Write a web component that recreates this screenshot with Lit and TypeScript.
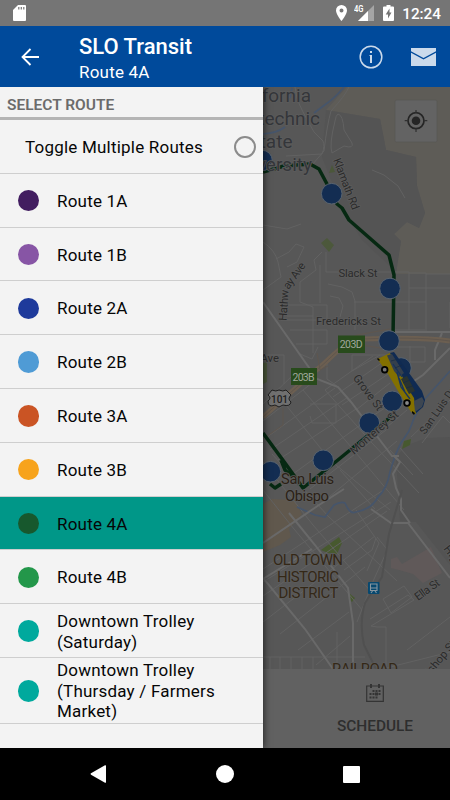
import { LitElement, html, css, svg } from "lit";
import { customElement, property } from "lit/decorators.js";
import { classMap } from "lit/directives/class-map.js";
import { styleMap } from "lit/directives/style-map.js";

interface Route {
  name: string;
  color: string;
  tall?: boolean;
}

const ROUTES: Route[] = [
  { name: "Route 1A", color: "#421d60" },
  { name: "Route 1B", color: "#8755a5" },
  { name: "Route 2A", color: "#1e3a9b" },
  { name: "Route 2B", color: "#4f9bd5" },
  { name: "Route 3A", color: "#ca5424" },
  { name: "Route 3B", color: "#f7a31c" },
  { name: "Route 4A", color: "#17582d" },
  { name: "Route 4B", color: "#23974a" },
  { name: "Downtown Trolley (Saturday)", color: "#00a99d" },
  { name: "Downtown Trolley (Thursday / Farmers Market)", color: "#00a99d", tall: true },
];

const STOPS = [
  [262, 160.5],
  [331.7, 193.7],
  [390, 288.5],
  [389, 341],
  [401, 368],
  [392.2, 401.3],
  [369.3, 423],
  [323.2, 460.3],
  [270.4, 471.7],
];

const MINOR_STREETS = [
  "M295 87L297 98Q300 108 314 132L323 141Q325 146 322 154L286 156",
  "M349 87Q345 96 331 111Q327 125 324 151L312 165",
  "M338 114Q343 115 344 130L352 143Q354 149 344 146L332 153Q329 145 335 121Q336 115 338 114",
  "M263 225L287 229L301 224M263 242Q275 250 278 262L281 277L263 290",
  "M276 259L289 252L296 244L304 247L297 262L287 267",
  "M322 252L314 260L316 270L300 282V302L313 307V353M326 252V272H409V330M409 273H426V331M409 288H450M354 302H426M426 274H450",
  "M328 284L342 287L352 292L355 301V330M330 296L339 298L343 306L340 317M320 265V303M287 305H327V320H281M287 316H313M290 330H327V344H296",
  "M385 347H425V362H400M410 346V362M393 330H425M450 302V328",
  "M263 355H284V384M300 354L312 359L318 347M352 355H394M352 355V371L380 355M327 361V379L337 386M337 350H353",
  "M325 390L373 356M333 397L386 360M342 405L397 368M356 410L390 383M362 423L400 398M374 438L407 410",
  "M263 404L293 375M263 421L312 383M263 440L335 388M270 450L348 397M278 460L356 409M293 474L374 415M310 489L386 430M329 497L397 441",
  "M282 400L330 460L390 510M303 390L351 447L404 510M325 390L372 443L419 493",
  "M272 454L328 516L397 581M263 490L294 529L363 611M263 462L313 525L372 593M340 470L375 509",
  "M263 569L385 489M263 582L391 502M263 596L387 511M263 622L375 536M280 634L365 567M298 650L349 612M316 665L350 636",
  "M310 404H336V423H312L310 416M400 448L423 474M390 450L413 475M422 443L443 416L450 423M411 437L450 400",
  "M377 537L386 548V553L374 579L364 604L357 622M376 538L372 550L344 570M356 510L379 543L367 571",
  "M383 599L404 586L412 597L391 613ZM370 619L408 595L414 600L371 626L377 627H386V668M337 632V668M365 657H263M270 657V669M280 657V669M291 657V669M302 657V669M313 657V669",
  "M407 650L450 617M386 668L450 652M372 170L384 175L398 186L405 198",
];

@customElement("transit-map")
export class TransitMap extends LitElement {
  static override styles = css`
    :host {
      display: block;
      overflow: hidden;
    }

    svg {
      display: block;
      width: 100%;
      height: 100%;
      font-family: Roboto, sans-serif;
    }

    .minor {
      fill: none;
      stroke: #626262;
      stroke-width: 1;
    }

    .major {
      fill: none;
      stroke: #696969;
      stroke-width: 2;
    }

    .water {
      fill: none;
      stroke: #46556b;
      stroke-width: 1.7;
    }

    .park {
      fill: #47592f;
    }

    .route {
      fill: none;
      stroke: #062912;
      stroke-width: 3.5;
      stroke-linejoin: round;
    }

    .stop {
      fill: #132d52;
      stroke: #58636f;
      stroke-width: 1;
    }

    .label {
      fill: #2b2b2b;
      stroke: #5c5c5c;
      stroke-width: 1.6;
      paint-order: stroke;
      font-size: 11.3px;
    }

    .campus {
      fill: #34363a;
      font-size: 19px;
    }

    .city {
      fill: #2b2116;
      font-size: 14.7px;
    }

    .district {
      fill: #342817;
      font-size: 15px;
    }

    .exit {
      fill: #a0a89b;
      font-size: 10.5px;
    }
  `;

  private _bus() {
    return svg`
      <g>
        <path fill="#0f2a52" d="M390 353L394 352L422 391L425 400L423 407L415 414L407 399Z" />
        <path fill="#837000" d="M377.5 359L390 353L394 363L401 374L409 390L414 398L416 414L411 412L406 404L398 391L388 374Z" />
        <path fill="#343f4c" d="M387 355.5L392 354L404 373L399 377L394 371Z" />
        <path fill="#293331" d="M401 379L407 376L415 391L409 394Z" />
        <path fill="#3d4651" d="M414 401L422 397L424 401L422 407L415 412Z" />
        <path fill="none" stroke="#17345d" stroke-width="1.3" d="M397 372L401 387L410 399M399 378L405 392M393 364L402 377" />
        <path stroke="#152943" stroke-width=".7" d="M391 361L398 359M395 368L402 365M403 383L410 380M406 388L413 386" />
        <circle cx="384.7" cy="369.7" r="2.8" fill="#777" stroke="#020202" stroke-width="1.8" />
        <circle cx="407" cy="403" r="2.8" fill="#888" stroke="#020202" stroke-width="1.8" />
        <path fill="#080804" d="M378 358L380 360L379 361L377 359ZM412 411L415 413L414 415L412 413Z" />
      </g>
    `;
  }

  override render() {
    return html`
      <svg viewBox="263 87 187 582" preserveAspectRatio="xMidYMid slice">
        <rect x="263" y="87" width="187" height="582" fill="#575757" />
        <path fill="#5e5c57" d="M347 87H450V274H396L401 241L394 234L407 222L419 228L425 213L417 186L416 157L386 150L380 119L326 110Z" />
        <path fill="#545454" d="M326 110L380 119L386 150L416 157L417 186L425 213L419 228L407 222L394 234L401 241L396 272L362 240L342 208L322 157Z" />
        <path fill="#535353" d="M396 458L405 446L427 438L450 437V565L416 522L400 521Z" />
        <path fill="#60584d" d="M263 504L272 499L294 500L302 514L289 529L291 537L280 545L263 552Z" />
        <path fill="#605959" d="M391 559L397 557L402 564L414 557L431 547L442 573L423 583L413 574L399 570L391 568Z" />
        <path class="park" d="M321 550L339 537L342 543L337 554L328 553Z" />
        <path class="park" d="M350 594L355 598L352 602L350 600ZM402 449L404 441L411 439L410 445Z" />
        <path class="park" d="M332 165L335 172L329 173ZM263 363L267 362V382L263 384ZM321 243L327 238L334 245L329 252Z" opacity=".7" />
        <path class="minor" d="${MINOR_STREETS.join("")}" />
        <path class="water" d="M344 87Q335 98 326 104L314 113M292 88L290 98M263 134Q277 133 285 127" />
        <path class="water" d="M450 371L424 400Q419 410 414 418Q412 424 409 431L401 443Q395 454 390 472Q387 489 378 497Q372 509 356 512Q350 515 345 503Q341 501 334 505L325 517L315 515L297 507" />
        <path class="major" d="M263 302L317 379L338 387L351 402L392 456H399M263 579L312 549M263 543L319 505L344 489M289 513L315 545L348 588L353 623V669M263 578L305 629L333 669M371 509L391 523H408L450 578M450 348L423 375L411 383M450 332H393M442 333L435 350L435 360M394 456L400 462L393 474L396 488L401 499V510L410 523" />
        <path fill="none" stroke="#505050" stroke-width="2" d="M402 490L389 534L382 577L365 603Q359 622 364 645L376 669" />
        <path fill="none" stroke="#6c5f51" stroke-width="5" d="M450 341C423 337 390 338 364 339C341 341 331 360 315 371L263 417" />
        <path fill="none" stroke="#5f564e" stroke-width="1" d="M450 341C423 337 390 338 364 339C341 341 331 360 315 371L263 417M390 329L357 335L337 345M317 353L320 370L328 366M263 439L283 425V408M362 345L380 348" />
        <path class="route" d="M263 172L284 166L310 164L319 169L327 184L337 204L342 208L349 220L389 255L394 275L393 337" />
        <path class="route" d="M393 415L333 464L303 488L285 463L263 433M281 460L285 470L299 484M270 484L275 488L281 484" />
        ${STOPS.map(([x, y]) => svg`<circle class="stop" cx=${x} cy=${y} r="10.3" />`)}
        <g class="label campus">
          <text x="311" y="102" text-anchor="end">California</text>
          <text x="320" y="125" text-anchor="end">Polytechnic</text>
          <text x="292.5" y="148" text-anchor="end">State</text>
          <text x="312" y="171" text-anchor="end">University</text>
        </g>
        <g class="label">
          <text transform="translate(333 160) rotate(69)" textLength="54">Klamath Rd</text>
          <text x="338.5" y="277" textLength="39">Slack St</text>
          <text x="316" y="325.3" textLength="65">Fredericks St</text>
          <text transform="translate(286.5 321) rotate(-86)" textLength="31">Hathw</text>
          <text transform="translate(288.5 290) rotate(-54)" textLength="30">ay Ave</text>
          <text x="279" y="362" text-anchor="end">Ave</text>
          <text transform="translate(352.5 378) rotate(53)" textLength="42">Grove St</text>
          <text transform="translate(354 455) rotate(-41)" textLength="60">Monterey St</text>
          <text transform="translate(425 435) rotate(-55)" font-size="10.8">San Luis Drive</text>
          <text transform="translate(418 601) rotate(-36)" textLength="28">Ella St</text>
          <text transform="translate(443 549) rotate(52)">High St</text>
          <text transform="translate(426 681) rotate(-50)">Bishop St</text>
        </g>
        ${this._bus()}
        <g class="label city">
          <text x="281" y="484" textLength="53">San Luis</text>
          <text x="285" y="501" textLength="44">Obispo</text>
        </g>
        <g class="label district">
          <text x="273" y="565" textLength="70">OLD TOWN</text>
          <text x="277" y="581.5" textLength="62">HISTORIC</text>
          <text x="278.5" y="598" textLength="60">DISTRICT</text>
          <text x="332" y="674" textLength="66">RAILROAD</text>
        </g>
        <rect x="338" y="335.5" width="27" height="17.5" fill="#284b1c" />
        <text class="exit" x="339.7" y="348" textLength="23">203D</text>
        <rect x="291" y="368" width="26" height="17" fill="#284b1c" />
        <text class="exit" x="292.5" y="380.7" textLength="22">203B</text>
        <path fill="#707070" stroke="#202020" stroke-width="1" d="M272 390Q276 392 279 390Q283 392 286 390L291 395Q287 399 291 402Q290 407 283 405L279 407L275 405Q268 408 268 401Q272 398 268 395Z" />
        <text x="279.5" y="402.5" text-anchor="middle" font-size="10" font-weight="500" fill="#202020">101</text>
        <rect x="368" y="582" width="11.5" height="12" rx="1" fill="#07486f" />
        <path fill="none" stroke="#8796a0" stroke-width="1.1" d="M370.5 584H377V590.5H370.5ZM371 588H377M371 593L372.5 591M376.5 593L375 591" />
        <rect x="395" y="100" width="42" height="42" rx="1.5" fill="#636363" stroke="#575653" stroke-width=".7" />
        <circle cx="416" cy="120.7" r="8" fill="none" stroke="#252525" stroke-width="1.7" />
        <circle cx="416" cy="120.7" r="4.3" fill="#252525" />
        <path stroke="#303030" stroke-width="1.2" d="M416 110V113M416 128.5V132M404.7 120.7H408M424 120.7H427.3" />
      </svg>
    `;
  }
}

@customElement("route-drawer")
export class RouteDrawer extends LitElement {
  @property({ type: String }) selected = "";

  static override styles = css`
    :host {
      display: flex;
      flex-direction: column;
      background: #f3f3f3;
      color: #060606;
      font-size: 17px;
      line-height: 20.6px;
      letter-spacing: 0.21px;
    }

    .heading {
      box-sizing: border-box;
      height: 33px;
      padding: 8px 7px 0;
      border-bottom: 3px solid #b4b4b4;
      color: #6b6b6b;
      font-size: 15.5px;
      line-height: 20px;
      font-weight: 600;
      letter-spacing: 0;
    }

    .toggle {
      box-sizing: border-box;
      display: flex;
      align-items: center;
      justify-content: space-between;
      height: 53.8px;
      padding: 1px 7px 0 25px;
      border-bottom: 1px solid #cecece;
    }

    .radio {
      box-sizing: border-box;
      width: 22px;
      height: 22px;
      border: 2px solid #8b8b8b;
      border-radius: 50%;
    }

    .route {
      box-sizing: border-box;
      display: flex;
      align-items: center;
      gap: 18px;
      height: 53.8px;
      padding: 1px 20px 0 17.5px;
      border-bottom: 1px solid #cecece;
    }

    .name {
      padding-top: 1px;
    }

    .tall {
      height: 66px;
    }

    .tall .name {
      padding-top: 0;
    }

    .active {
      background: #009788;
    }

    .dot {
      flex: none;
      width: 21.5px;
      height: 21.5px;
      border-radius: 50%;
    }
  `;

  override render() {
    return html`
      <div class="heading">SELECT ROUTE</div>
      <div class="toggle">
        <span class="name">Toggle Multiple Routes</span>
        <span class="radio"></span>
      </div>
      ${ROUTES.map(
        (r) => html`
          <div class=${classMap({ route: true, tall: !!r.tall, active: r.name === this.selected })}>
            <span class="dot" style=${styleMap({ background: r.color })}></span>
            <span class="name">${r.name}</span>
          </div>
        `,
      )}
    `;
  }
}

@customElement("app-root")
export class AppRoot extends LitElement {
  static override styles = css`
    :host {
      display: flex;
      flex-direction: column;
      height: 800px;
      overflow: hidden;
      font-family: Roboto, sans-serif;
      background: #000;
    }

    svg {
      display: block;
    }

    .status {
      box-sizing: border-box;
      display: flex;
      align-items: center;
      height: 26px;
      padding: 0 9px 0 13px;
      background: #757575;
      color: #fff;
    }

    .status .pin {
      margin-left: auto;
    }

    .signal {
      margin-left: 7px;
    }

    .battery {
      margin: 0 8px 0 9px;
    }

    .clock {
      padding-top: 1px;
      font-size: 15.3px;
      font-weight: 500;
      line-height: 26px;
    }

    .toolbar {
      box-sizing: border-box;
      display: flex;
      align-items: center;
      height: 61px;
      padding: 0 14px 0 21px;
      background: #004a9b;
      color: #fff;
    }

    .titles {
      flex: 1;
      margin-left: 40px;
      padding-top: 6px;
    }

    .title {
      font-size: 22px;
      line-height: 26px;
      font-weight: 500;
    }

    .subtitle {
      font-size: 17px;
      line-height: 25px;
      letter-spacing: 0.2px;
    }

    .actions {
      display: flex;
      align-items: center;
      gap: 28px;
    }

    .body {
      display: grid;
      grid-template-columns: 263px 1fr;
      height: 661px;
      overflow: hidden;
    }

    route-drawer {
      z-index: 1;
      box-shadow: 1px 0 7px rgba(0, 0, 0, 0.6);
    }

    .content {
      display: flex;
      flex-direction: column;
    }

    transit-map {
      height: 582px;
    }

    .tab {
      box-sizing: border-box;
      display: flex;
      flex-direction: column;
      align-items: center;
      gap: 14px;
      height: 79px;
      padding: 15px 0 0 37px;
      background: #616161;
      color: #2e2e2e;
      font-size: 15.4px;
      font-weight: 500;
      line-height: 20px;
    }

    .navbar {
      display: flex;
      align-items: center;
      justify-content: center;
      gap: 109px;
      height: 52px;
      background: #000;
    }
  `;

  override render() {
    return html`
      <div class="status">
        <svg width="13" height="16" viewBox="0 0 13 16">
          <path fill="#fff" d="M5 0H12Q13 0 13 1V15Q13 16 12 16H1Q0 16 0 15V5Z" />
          <path stroke="#757575" stroke-width="1.2" d="M5.8 2V4.5M8.3 2V4.5M10.8 2V4.5" />
        </svg>
        <svg class="pin" width="11" height="16" viewBox="0 0 11 16">
          <path fill="#fff" fill-rule="evenodd" d="M5.5 0A5.5 5.5 0 0 0 0 5.5C0 9.5 5.5 16 5.5 16S11 9.5 11 5.5A5.5 5.5 0 0 0 5.5 0ZM5.5 3.5A2 2 0 1 1 5.5 7.5A2 2 0 0 1 5.5 3.5Z" />
        </svg>
        <svg class="signal" width="20" height="16" viewBox="0 0 20 16">
          <path fill="#a5a5a5" d="M20 0V16H4Z" />
          <path fill="#fff" d="M14 6V16H4Z" />
          <text x="0" y="7.3" font-size="9" font-weight="600" textLength="9.5" lengthAdjust="spacingAndGlyphs" fill="#fff" stroke="#757575" stroke-width="1" paint-order="stroke">4G</text>
        </svg>
        <svg class="battery" width="11" height="16" viewBox="0 0 11 16">
          <path fill="#fff" d="M3.5 0H7.5V1.5H10Q11 1.5 11 2.5V15Q11 16 10 16H1Q0 16 0 15V2.5Q0 1.5 1 1.5H3.5Z" />
          <path fill="#757575" d="M6.5 3.5L2.7 9.5H5V13.5L8.5 7.5H6.5Z" />
        </svg>
        <span class="clock">12:24</span>
      </div>
      <div class="toolbar">
        <svg width="18" height="18" viewBox="0 0 18 18" fill="none" stroke="#fff" stroke-width="1.8">
          <path d="M18 9H2M9.5 1L1.5 9L9.5 17" />
        </svg>
        <div class="titles">
          <div class="title">SLO Transit</div>
          <div class="subtitle">Route 4A</div>
        </div>
        <div class="actions">
          <svg width="24" height="24" viewBox="0 0 24 24">
            <circle cx="12" cy="12" r="10.8" fill="none" stroke="#cbdaeb" stroke-width="1.5" />
            <path fill="#cbdaeb" d="M11 6H13V8H11ZM10.5 10H13V18H11V11H10.5Z" />
          </svg>
          <svg width="25" height="18" viewBox="0 0 25 18">
            <path fill="#cbdaeb" d="M0 0H25V3.3L12.5 10L0 3.3ZM0 4.7L12.5 11.5L25 4.7V18H0Z" />
          </svg>
        </div>
      </div>
      <div class="body">
        <route-drawer selected="Route 4A"></route-drawer>
        <div class="content">
          <transit-map></transit-map>
          <div class="tab">
            <svg width="18" height="18" viewBox="0 0 18 18">
              <path fill="none" stroke="#343434" stroke-width="1.2" d="M.7 2H17.3V17.3H.7Z" />
              <path fill="#343434" d="M4 0H6V4H4ZM12 0H14V4H12ZM6.5 6H8.5V8H6.5ZM9.5 6H11.5V8H9.5ZM12.5 6H14.5V8H12.5ZM3.5 9H5.5V11H3.5ZM6.5 9H8.5V11H6.5ZM9 8.5H12V11.5H9ZM12.5 9H14.5V11H12.5ZM3.5 12.5H5.5V14.5H3.5ZM6.5 12.5H8.5V14.5H6.5ZM9.5 12.5H11.5V14.5H9.5Z" />
            </svg>
            <span>SCHEDULE</span>
          </div>
        </div>
      </div>
      <div class="navbar">
        <svg width="17" height="18" viewBox="0 0 17 18">
          <path fill="#fff" d="M15 .3Q16 -.2 16 1V17Q16 18.2 15 17.7L1 9.7Q.2 9 1 8.3Z" />
        </svg>
        <svg width="18" height="18" viewBox="0 0 18 18"><circle cx="9" cy="9" r="9" fill="#fff" /></svg>
        <svg width="17" height="17" viewBox="0 0 17 17"><rect width="17" height="17" rx="1" fill="#fff" /></svg>
      </div>
    `;
  }
}

declare global {
  interface HTMLElementTagNameMap {
    "app-root": AppRoot;
    "route-drawer": RouteDrawer;
    "transit-map": TransitMap;
  }
}
